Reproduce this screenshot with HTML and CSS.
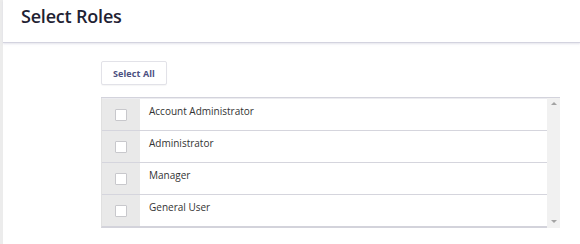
FILE: index.html
```html
<!DOCTYPE html>
<html>
<head>
<meta charset="utf-8">
<link rel="stylesheet" href="styles.css">
</head>
<body>
<div class="page">
  <div class="strip"></div>
  <div class="main">
    <header class="header"><h1 class="title">Select Roles</h1></header>
    <div class="content">
      <button class="btn">Select All</button>
      <div class="listwrap">
        <div class="list">
          <div class="row"><div class="cbcell"><span class="cb"></span></div><div class="label">Account Administrator</div></div>
          <div class="row"><div class="cbcell"><span class="cb"></span></div><div class="label">Administrator</div></div>
          <div class="row"><div class="cbcell"><span class="cb"></span></div><div class="label">Manager</div></div>
          <div class="row"><div class="cbcell"><span class="cb"></span></div><div class="label">General User</div></div>
        </div>
        <div class="scrollbar">
          <span class="arrow up"></span>
          <span class="arrow down"></span>
        </div>
      </div>
    </div>
  </div>
</div>
</body>
</html>
```
FILE: styles.css
```css
* { box-sizing: border-box; }
html, body { margin: 0; padding: 0; background: #fff; }
body { font-family: "Open Sans", "Noto Sans", sans-serif; color: #333; }
.page { display: flex; width: 580px; height: 244px; overflow: hidden; }
.strip { width: 3px; background: #ececec; flex: none; }
.main { flex: 1; display: flex; flex-direction: column; }
.header {
  height: 43px;
  border-bottom: 1px solid #d3d3df;
  box-shadow: 0 1px 2px rgba(200,200,215,0.5);
  padding-left: 18px;
  display: flex; align-items: flex-start;
}
.title {
  margin: 0; padding-top: 4px;
  font-size: 18px; font-weight: 600; color: #1f2233;
  letter-spacing: -0.2px;
}
.content { padding: 18px 0 0 98px; display: flex; flex-direction: column; align-items: flex-start; }
.btn {
  width: 66px; height: 24px;
  background: #fff; border: 1px solid #e2e2e8; border-radius: 2px;
  font-family: "Open Sans", sans-serif; font-size: 9px; font-weight: 700;
  color: #4b5080; padding: 0; letter-spacing: 0.1px;
  box-shadow: 0 1px 1px rgba(0,0,0,0.04);
}
.listwrap { margin-top: 12px; display: flex; width: 459px; border-top: 1px solid #d3d3dc; box-shadow: inset 0 1px 0 #ececf0; }
.list { width: 446px; border-bottom: 2px solid #d3d3db; border-left: 1px solid #e0e0e0; }
.row { display: flex; height: 32px; border-top: 1px solid #d5d5dd; }
.row:first-child { border-top: 1px solid #ececf0; }
.cbcell { width: 38px; background: #e9e9e9; display: flex; align-items: center; justify-content: center; }
.cb { width: 12px; height: 12px; background: #fff; border: 1px solid #c8c8cc; border-radius: 1px; }
.label { padding-left: 9px; font-size: 10px; color: #333; padding-top: 5px; }
.scrollbar { width: 13px; background: #f1f1f1; display: flex; flex-direction: column; justify-content: space-between; align-items: center; padding: 4px 0 5px; }
.arrow { width: 0; height: 0; border-left: 3px solid transparent; border-right: 3px solid transparent; }
.arrow.up { border-bottom: 3px solid #a3a3a3; }
.arrow.down { border-top: 3px solid #a3a3a3; }
```
